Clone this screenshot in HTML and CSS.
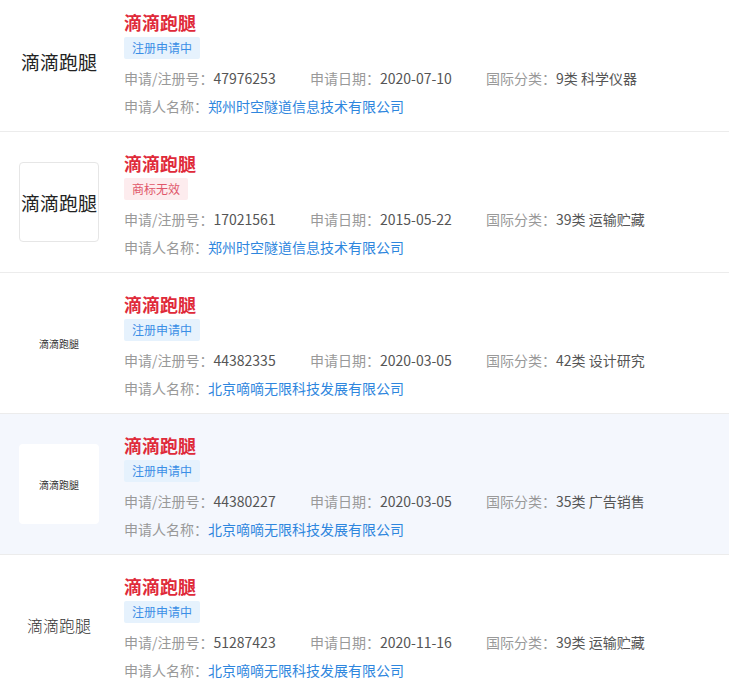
FILE: index.html
```html
<!DOCTYPE html>
<html>
  <head>
    <meta charset="utf-8">
    <title>商标查询</title>
    <link rel="stylesheet" href="styles.css">
  </head>
  <body>
    <div class="list">
      <div class="item">
        <div class="logo"><span class="logo-text big">滴滴跑腿</span></div>
        <div class="info">
          <div class="name">滴滴跑腿</div>
          <div><span class="tag">注册申请中</span></div>
          <div class="meta first">
            <span class="col1">申请/注册号：<em>47976253</em></span>
            <span class="col2">申请日期：<em>2020-07-10</em></span>
            <span>国际分类：<em>9类 科学仪器</em></span>
          </div>
          <div class="meta">申请人名称：<a href="#">郑州时空隧道信息技术有限公司</a></div>
        </div>
      </div>

      <div class="item">
        <div class="logo framed"><span class="logo-text big">滴滴跑腿</span></div>
        <div class="info">
          <div class="name">滴滴跑腿</div>
          <div><span class="tag invalid">商标无效</span></div>
          <div class="meta first">
            <span class="col1">申请/注册号：<em>17021561</em></span>
            <span class="col2">申请日期：<em>2015-05-22</em></span>
            <span>国际分类：<em>39类 运输贮藏</em></span>
          </div>
          <div class="meta">申请人名称：<a href="#">郑州时空隧道信息技术有限公司</a></div>
        </div>
      </div>

      <div class="item">
        <div class="logo"><span class="logo-text tiny">滴滴跑腿</span></div>
        <div class="info">
          <div class="name">滴滴跑腿</div>
          <div><span class="tag">注册申请中</span></div>
          <div class="meta first">
            <span class="col1">申请/注册号：<em>44382335</em></span>
            <span class="col2">申请日期：<em>2020-03-05</em></span>
            <span>国际分类：<em>42类 设计研究</em></span>
          </div>
          <div class="meta">申请人名称：<a href="#">北京嘀嘀无限科技发展有限公司</a></div>
        </div>
      </div>

      <div class="item active">
        <div class="logo"><span class="logo-text tiny">滴滴跑腿</span></div>
        <div class="info">
          <div class="name">滴滴跑腿</div>
          <div><span class="tag">注册申请中</span></div>
          <div class="meta first">
            <span class="col1">申请/注册号：<em>44380227</em></span>
            <span class="col2">申请日期：<em>2020-03-05</em></span>
            <span>国际分类：<em>35类 广告销售</em></span>
          </div>
          <div class="meta">申请人名称：<a href="#">北京嘀嘀无限科技发展有限公司</a></div>
        </div>
      </div>

      <div class="item">
        <div class="logo"><span class="logo-text light">滴滴跑腿</span></div>
        <div class="info">
          <div class="name">滴滴跑腿</div>
          <div><span class="tag">注册申请中</span></div>
          <div class="meta first">
            <span class="col1">申请/注册号：<em>51287423</em></span>
            <span class="col2">申请日期：<em>2020-11-16</em></span>
            <span>国际分类：<em>39类 运输贮藏</em></span>
          </div>
          <div class="meta">申请人名称：<a href="#">北京嘀嘀无限科技发展有限公司</a></div>
        </div>
      </div>
    </div>
  </body>
</html>
```

FILE: styles.css
```css
body {
  margin: 0;
  padding: 0;
  background-color: #fff;
  font-family: "Noto Sans CJK SC", "Noto Sans", sans-serif;
  overflow: hidden;
}

.list {
  margin-top: -9px;
}

.item {
  display: flex;
  align-items: flex-start;
  height: 141px;
  box-sizing: border-box;
  padding: 20px 0 12px 19px;
  border-bottom: 1px solid #ececec;
  background-color: #fff;
}

.item.active {
  background-color: #f4f7fd;
}

.logo {
  width: 80px;
  height: 80px;
  margin-top: 10px;
  margin-right: 25px;
  box-sizing: border-box;
  display: flex;
  align-items: center;
  justify-content: center;
  background-color: #fff;
  border-radius: 4px;
  flex-shrink: 0;
}

.logo.framed {
  border: 1px solid #e6e6e6;
}

.logo-text {
  color: #222;
  white-space: nowrap;
}
.logo-text.big {
  font-size: 19px;
}
.logo-text.tiny {
  font-size: 10px;
  color: #333;
}
.logo-text.light {
  font-size: 16px;
  font-weight: 300;
  color: #333;
}

.info {
  display: flex;
  flex-direction: column;
}

.name {
  font-size: 18px;
  line-height: 22px;
  font-weight: 700;
  color: #df2a3a;
}

.tag {
  display: inline-block;
  margin-top: 4px;
  height: 22px;
  line-height: 22px;
  padding: 0 8px;
  font-size: 12px;
  color: #3a8ee6;
  background-color: #e6f2fd;
  border-radius: 2px;
}
.tag.invalid {
  color: #e0566a;
  background-color: #fdecee;
}

.meta {
  display: flex;
  font-size: 14px;
  line-height: 28px;
  color: #999;
  white-space: nowrap;
}
.meta.first {
  margin-top: 5px;
}

.meta em {
  font-style: normal;
  color: #555;
}

.meta a {
  color: #2e86de;
  text-decoration: none;
}

.col1 {
  width: 186px;
}
.col2 {
  width: 176px;
}
```
